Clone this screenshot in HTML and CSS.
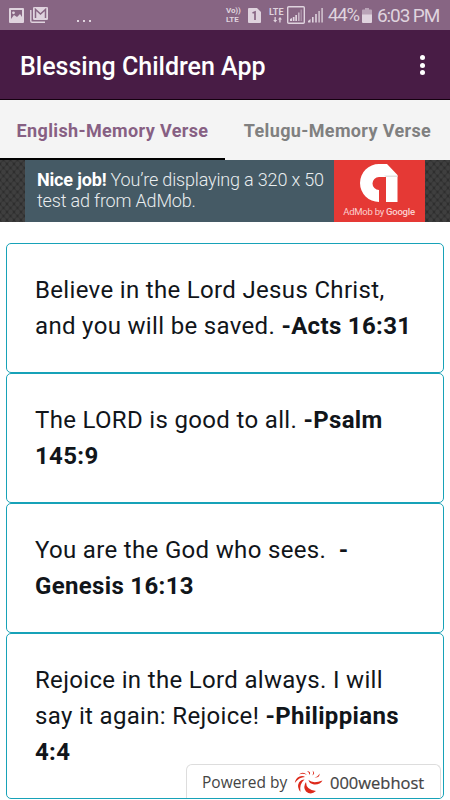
FILE: index.html
```html
<!DOCTYPE html>
<html lang="en">
<head>
    <meta charset="UTF-8">
    <title>Blessing Children App</title>
    <link rel="stylesheet" href="styles.css">
</head>
<body>

    <div class="status-bar">
        <svg class="icon-picture" width="15" height="15" viewBox="0 0 15 15">
            <path fill="#dfd3de" fill-rule="evenodd" d="M1 0h13q1 0 1 1v13q0 1-1 1H1q-1 0-1-1V1q0-1 1-1zM2 2v9l3-4 3 2 3-3 2 3V2z"/>
            <circle cx="4.5" cy="4.8" r="1.4" fill="#dfd3de"/>
        </svg>
        <svg class="icon-mail" width="18" height="16" viewBox="0 0 18 16">
            <path fill="none" stroke="#dfd3de" stroke-width="1.4" d="M.8 3v11q0 1.3 1.3 1.3H15"/>
            <rect x="3" y="0" width="15" height="13" rx="1.3" fill="#dfd3de"/>
            <path fill="none" stroke="#876583" stroke-width="1.5" d="M5.500 11V2.500l5 4.500 5-4.500V11"/>
        </svg>
        <span class="dots"><i></i><i></i><i></i></span>
        <div class="volte"><div>Vo))</div><div>LTE</div></div>
        <svg class="icon-sim" width="13" height="15" viewBox="0 0 13 15">
            <path fill="#dfd3de" d="M1 0h8l4 4v10q0 1-1 1H1q-1 0-1-1V1q0-1 1-1z"/>
            <path fill="none" stroke="#876583" stroke-width="1.7" d="M4.500 5L7 4v8"/>
        </svg>
        <span class="lte">LTE
            <svg width="9" height="6" viewBox="0 0 9 6">
                <path fill="#dfd3de" d="M1.500 0h1.300v3h1.400l-2 2.600-2-2.600h1.300zM6.300 5.600h1.300v-3H9L7 0 5 2.600h1.300z"/>
            </svg>
        </span>
        <svg class="icon-signal" width="18" height="18" viewBox="0 0 18 18">
            <rect x=".7" y=".7" width="16.600" height="16.600" rx="1" fill="none" stroke="#dfd3de" stroke-width="1.4"/>
            <path fill="#dfd3de" d="M3 13l2-1v3H3zM5.800 11h1.700v4H5.800zM8.300 9H10v6H8.300z"/>
            <path fill="#c6b3c4" d="M11 6.500h1.600V15H11z"/>
            <path fill="#a78da4" d="M13.500 3.500H15V15h-1.500z"/>
        </svg>
        <svg class="icon-signal-small" width="15" height="16" viewBox="0 0 15 16">
            <path fill="#dfd3de" d="M0 14l2.500-2v3.500H0zM4 10h1.600v5.500H4zM7.200 7h1.600v8.500H7.200z"/>
            <path fill="#cfc0cd" d="M10.300 4h1.600v11.500h-1.600zM13.300 1h1.600v14.500h-1.600z"/>
        </svg>
        <span class="battery">44%</span>
        <svg class="icon-battery" width="10" height="15" viewBox="0 0 10 15">
            <path fill="#b9a3b7" d="M3 0h4v1.500h2q1 0 1 1V8H0V2.500q0-1 1-1h2z"/>
            <path fill="#dfd3de" d="M0 6.500h10V14q0 1-1 1H1q-1 0-1-1z"/>
        </svg>
        <span class="clock">6:03 PM</span>
    </div>

    <div class="app-bar">
        <h1>Blessing Children App</h1>
        <div class="menu"><i></i><i></i><i></i></div>
    </div>

    <div class="tabs">
        <div class="tab active"><span>English-Memory Verse</span></div>
        <div class="tab"><span>Telugu-Memory Verse</span></div>
    </div>

    <div class="ad">
        <div class="ad-text"><b>Nice job!</b> You’re displaying a 320 x 50<br>test ad from AdMob.</div>
        <div class="ad-logo">
            <svg width="38" height="38" viewBox="0 0 38 38">
                <path fill="#fff" d="M19 38A19 19 0 0 1 19 0H27L37.500 11V38H26V13H19A6.500 6.500 0 0 0 19 26z"/>
                <path fill="#e1e1e1" d="M24 11.500h13.500V13H26z"/>
            </svg>
            <div class="ad-name">AdMob by <span>Google</span></div>
        </div>
    </div>

    <div class="verses">
        <div class="card">Believe in the Lord Jesus Christ,<br>and you will be saved. <b>-Acts 16:31</b></div>
        <div class="card">The LORD is good to all. <b>-Psalm<br>145:9</b></div>
        <div class="card">You are the God who sees. &nbsp;<b>-<br>Genesis 16:13</b></div>
        <div class="card">Rejoice in the Lord always. I will<br>say it again: Rejoice! <b>-Philippians<br>4:4</b></div>
    </div>

    <div class="powered">
        <span class="powered-by">Powered by</span>
        <svg width="29" height="25" viewBox="0 0 29 25">
            <g fill="#dd2a1b">
                <path d="M14.500 10Q19 14 28.500 10.500Q26 15 20 14.500Q15 13.500 14.500 10z"/>
                <path d="M12 12Q12 20 22 21Q17 25.500 12 21.500Q8.500 17 12 12z"/>
                <path d="M10.500 9.500Q5 14 6.500 22Q2.500 17 5 12.500Q7 9.500 10.500 9.500z"/>
                <path d="M11 7Q5 7 .8 13Q1.500 8 5.500 6.500Q9 5.500 11 7z"/>
                <path d="M13 5Q9 3 5 4.500Q9 1 13 5z"/>
                <path d="M15.500 5Q15.500 2.500 13 1Q17.500 1.500 15.500 5zM18 5.500Q20 3.500 18.500.500Q22 3.500 18 5.500zM20.500 7.500Q24 7 25.500 3.500Q26 8 20.500 7.500z"/>
            </g>
        </svg>
        <span class="host">000webhost</span>
    </div>

</body>
</html>
```

FILE: styles.css
```css
body {
    margin: 0;
    width: 450px;
    height: 800px;
    overflow: hidden;
    background: #fff;
    font-family: Roboto, sans-serif;
}
svg {
    display: block;
    flex: none;
}
span {
    white-space: nowrap;
}
.status-bar {
    display: flex;
    align-items: center;
    box-sizing: border-box;
    height: 30px;
    padding-left: 9px;
    background: #876583;
    color: #dfd3de;
}
.icon-mail {
    margin-left: 6px;
}
.dots {
    display: flex;
    gap: 4px;
    margin: 12px 0 0 29px;
}
.dots i {
    width: 2px;
    height: 2px;
    background: #dfd3de;
}
.volte {
    width: 16px;
    margin-left: 135px;
    font-size: 8px;
    font-weight: 700;
    line-height: 9px;
    letter-spacing: -0.1px;
}
.icon-sim {
    margin-left: 6px;
}
.lte {
    width: 16px;
    margin-left: 8px;
    font-size: 9px;
    font-weight: 700;
    line-height: 9px;
}
.lte svg {
    margin: 0 auto;
}
.icon-signal {
    margin-left: 2px;
}
.icon-signal-small {
    margin-left: 3px;
}
.battery {
    width: 30px;
    margin-left: 5px;
    font-size: 18.5px;
    letter-spacing: -1.1px;
}
.icon-battery {
    margin-left: 4px;
}
.clock {
    margin-left: 5px;
    font-size: 19px;
    letter-spacing: -1.1px;
}
.app-bar {
    display: flex;
    align-items: center;
    justify-content: space-between;
    box-sizing: border-box;
    height: 70px;
    padding: 3px 25px 0 20px;
    border-bottom: 1px solid #14000f;
    background: #481c45;
}
.app-bar h1 {
    margin: 0;
    color: #fff;
    font-size: 25px;
    font-weight: 500;
}
.menu {
    display: flex;
    flex-direction: column;
    gap: 2.5px;
    margin-top: -2px;
}
.menu i {
    width: 5px;
    height: 5px;
    border-radius: 50%;
    background: #fff;
}
.tabs {
    display: flex;
    height: 60px;
    background: #f4f4f4;
}
.tab {
    display: flex;
    align-items: center;
    justify-content: center;
    box-sizing: border-box;
    width: 225px;
    color: #808080;
    font-size: 18px;
    font-weight: 700;
    letter-spacing: 0.36px;
}
.tab.active {
    border-bottom: 2px solid #000;
    padding-top: 2px;
    color: #876083;
}
.ad {
    display: flex;
    box-sizing: border-box;
    height: 62px;
    padding: 0 25px;
    background-color: #2e2e2e;
    background-image: radial-gradient(#3f3f3f 1.8px, transparent 2.8px), radial-gradient(#3f3f3f 1.8px, transparent 2.8px);
    background-size: 7px 8px;
    background-position: 0 0, 3.5px 4px;
}
.ad-text {
    box-sizing: border-box;
    width: 309px;
    padding: 9px 0 0 12px;
    background: #455a65;
    color: #e9edef;
    font-size: 18px;
    font-weight: 300;
    line-height: 21px;
    letter-spacing: -0.17px;
    white-space: nowrap;
}
.ad-text b {
    color: #fff;
    font-weight: 700;
}
.ad-logo {
    display: flex;
    flex-direction: column;
    align-items: center;
    width: 91px;
    padding: 4px 1px 0 0;
    box-sizing: border-box;
    background: #e53935;
}
.ad-name {
    margin-top: 4px;
    color: #fbd0cf;
    font-size: 9.5px;
    line-height: 12px;
    letter-spacing: -0.25px;
    white-space: nowrap;
}
.ad-name span {
    font-weight: 500;
}
.verses {
    padding: 21px 6px 0;
}
.card {
    box-sizing: border-box;
    padding: 28px;
    border: 1px solid #17a2b8;
    border-radius: 5px;
    color: #11151a;
    font-size: 24px;
    line-height: 36px;
    letter-spacing: 0.33px;
    white-space: nowrap;
}
.card b {
    font-weight: 700;
}
.powered {
    position: absolute;
    left: 186px;
    top: 764px;
    display: flex;
    align-items: center;
    box-sizing: border-box;
    width: 255px;
    height: 34px;
    padding: 1px 0 0 15px;
    border: 1px solid #ddd;
    border-bottom: 0;
    border-radius: 6px 6px 0 0;
    background: #fff;
    color: #444;
}
.powered-by {
    width: 84px;
    font-family: "Open Sans", sans-serif;
    font-size: 15.5px;
}
.powered svg {
    margin-left: 8px;
}
.host {
    margin-left: 7px;
    font-family: "Open Sans", sans-serif;
    font-size: 16.5px;
    font-weight: 500;
    -webkit-text-stroke: 0.2px #444;
}
```
